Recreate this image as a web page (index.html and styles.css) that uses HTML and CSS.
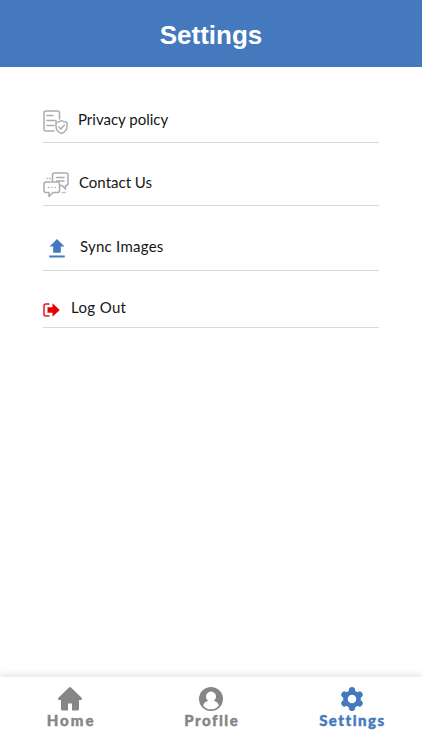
FILE: index.html
```
<!DOCTYPE html>
<html lang="en">
<head>
    <meta charset="UTF-8">
    <meta name="viewport" content="width=device-width, initial-scale=1.0">
    <title>Settings</title>
    <link rel="stylesheet" href="styles.css">
</head>
<body>
    <header class="header">
        <h1>Settings</h1>
    </header>

    <main class="menu">
        <a class="menu-item privacy">
            <svg class="line-icon" width="25" height="25" viewBox="0 0 25 25">
                <path d="M11 21H3a2 2 0 0 1-2-2V3a2 2 0 0 1 2-2h11.500a2 2 0 0 1 2 2v6M4 5.500h6M4 10.500h9M4 15.500h7"/>
                <path d="M18.500 10.500c1.800 1.300 3.500 1.700 5.500 1.700v4.300c0 3.500-2.500 5.800-5.500 7-3-1.200-5.500-3.500-5.500-7v-4.300c2 0 3.700-.4 5.500-1.700zM15.800 17l2 2 3.600-4"/>
            </svg>
            <span>Privacy policy</span>
        </a>
        <a class="menu-item contact">
            <svg class="line-icon" width="26" height="26" viewBox="0 0 26 26">
                <path d="M9.500 9V3a2 2 0 0 1 2-2H23a2 2 0 0 1 2 2v8.500a2 2 0 0 1-2 2h-.5V17L19 13.500h-2M13.500 5.500H21M13.500 9H21"/>
                <path d="M3 10h11.500a2 2 0 0 1 2 2v6.500a2 2 0 0 1-2 2H10l-4 4v-4H3a2 2 0 0 1-2-2V12a2 2 0 0 1 2-2z"/>
                <path d="M5.500 15.500h.1M8.800 15.500h.1M12.100 15.500h.1M4 6.500h.1M6.500 6.500h.5M19.500 20.500h.5M22 20.500h.1"/>
            </svg>
            <span>Contact Us</span>
        </a>
        <a class="menu-item sync">
            <svg width="16" height="19" viewBox="0 0 16 19" fill="#4479bd">
                <path d="M8 0l7.500 7.500h-3.700v6.300H4.200V7.500H.5zM.2 16.500h15.600v2H.2z"/>
            </svg>
            <span>Sync Images</span>
        </a>
        <a class="menu-item logout">
            <svg width="17" height="14" viewBox="0 0 17 14">
                <path d="M6.500 1H3a2 2 0 0 0-2 2v8a2 2 0 0 0 2 2h3.500" fill="none" stroke="#e5141b" stroke-width="1.500"/>
                <path d="M4.500 4.200H9.500V.3L16.700 7 9.500 13.700V9.800H4.500z" fill="#e60008"/>
            </svg>
            <span>Log Out</span>
        </a>
    </main>

    <nav class="tab-bar">
        <a class="tab home">
            <svg width="24" height="24" viewBox="0 0 24 24" fill="currentColor">
                <path d="M11 .5a1.500 1.500 0 0 1 2 0l10.600 10.200c.8.900.2 2.300-1 2.300H21v9a1.500 1.500 0 0 1-1.500 1.500H14v-7h-4v7H4.500A1.500 1.500 0 0 1 3 22v-9H1.400c-1.200 0-1.800-1.400-1-2.300z"/>
            </svg>
            <span>Home</span>
        </a>
        <a class="tab profile">
            <svg width="24" height="24" viewBox="0 0 24 24">
                <circle cx="12" cy="12" r="12" fill="currentColor"/>
                <path d="M4.200 18.700c.5-3 2.300-4.300 5-5a5 5 0 1 1 5.600 0c2.700.7 4.500 2 5 5a10.200 10.200 0 0 1-15.600 0z" fill="#fff"/>
            </svg>
            <span>Profile</span>
        </a>
        <a class="tab settings active">
            <svg width="24" height="24" viewBox="0 0 24 24">
                <g stroke="currentColor" stroke-width="6.400" stroke-linejoin="round">
                    <path d="M12 3.300v17.400M4.500 7.650l15 8.700M4.500 16.350l15-8.700" stroke-linecap="round"/>
                </g>
                <circle cx="12" cy="12" r="8.800" fill="currentColor"/>
                <circle cx="12" cy="12" r="4.300" fill="#fff"/>
            </svg>
            <span>Settings</span>
        </a>
    </nav>
</body>
</html>
```
FILE: styles.css
```
* {
    box-sizing: border-box;
}

body {
    display: flex;
    flex-direction: column;
    height: 100vh;
    margin: 0;
    background-color: #fff;
    font-family: Lato, sans-serif;
}

.header {
    height: 67px;
    padding-top: 2px;
    display: flex;
    align-items: center;
    justify-content: center;
    background-color: #4479bd;
}

.header h1 {
    margin: 0;
    color: #fff;
    font-family: "Liberation Sans", Arial, sans-serif;
    font-size: 26px;
    line-height: 30px;
}

.menu {
    flex: 1;
    padding: 12px 43px 0;
}

.menu-item {
    display: flex;
    align-items: flex-end;
    height: 64px;
    border-bottom: 1px solid #dadada;
    color: #161616;
    font-size: 15px;
    line-height: 20px;
}

.menu-item span {
    margin-bottom: 13px;
}

.line-icon {
    fill: none;
    stroke: #acacac;
    stroke-width: 1.500;
    stroke-linecap: round;
    stroke-linejoin: round;
}

.privacy {
    gap: 10px;
}

.privacy svg {
    margin-bottom: 7px;
}

.contact {
    gap: 10px;
    height: 63px;
}

.contact svg {
    margin-bottom: 7px;
}

.sync {
    gap: 15px;
    height: 65px;
    padding-left: 6px;
    letter-spacing: 0.25px;
}

.sync svg {
    margin-bottom: 12px;
}

.sync span {
    margin-bottom: 14px;
}

.logout {
    gap: 11px;
    height: 57px;
    letter-spacing: 0.35px;
}

.logout svg {
    margin-bottom: 10px;
}

.logout span {
    margin-bottom: 10px;
}

.tab-bar {
    display: grid;
    grid-template-columns: repeat(3, 1fr);
    height: 73px;
    background-color: #fff;
    box-shadow: 0 -2px 8px rgba(0, 0, 0, 0.12);
}

.tab {
    display: flex;
    flex-direction: column;
    align-items: center;
    padding-top: 10px;
    color: #868686;
    font-size: 15px;
    font-weight: 900;
    line-height: 19px;
    letter-spacing: 1.5px;
    -webkit-text-stroke: 0.4px currentColor;
}

.tab span {
    margin-right: -1.5px;
}

.home span {
    letter-spacing: 2px;
}

.active {
    color: #4479bd;
}
```
